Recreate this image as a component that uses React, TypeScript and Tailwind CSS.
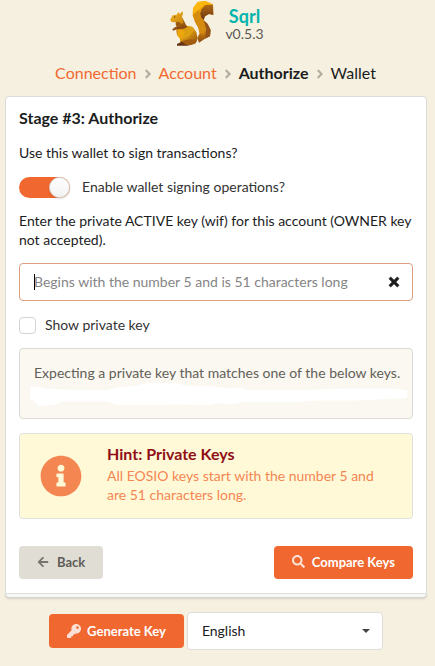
import React, { useState } from "react";
import {
  FaAngleRight,
  FaArrowLeft,
  FaInfoCircle,
  FaKey,
  FaSearch,
  FaTimes,
} from "react-icons/fa";

function Squirrel() {
  return (
    <svg viewBox="0 0 150 150" className="size-[50px]" aria-hidden="true">
      <defs>
        <linearGradient id="tailOuter" x1="0" y1="0" x2="0" y2="1">
          <stop offset="0" stopColor="#fbb40a" />
          <stop offset="0.45" stopColor="#d98c0c" />
          <stop offset="0.75" stopColor="#c97b10" />
          <stop offset="1" stopColor="#8a4a14" />
        </linearGradient>
        <linearGradient id="tailTip" x1="0" y1="0" x2="0" y2="1">
          <stop offset="0" stopColor="#b06a14" />
          <stop offset="1" stopColor="#6e3614" />
        </linearGradient>
        <linearGradient id="haunch" x1="0" y1="0" x2="1" y2="1">
          <stop offset="0" stopColor="#b87010" />
          <stop offset="0.4" stopColor="#e6a210" />
          <stop offset="1" stopColor="#8c4c10" />
        </linearGradient>
        <linearGradient id="head" x1="0" y1="0" x2="1" y2="1">
          <stop offset="0" stopColor="#f4b820" />
          <stop offset="1" stopColor="#c98410" />
        </linearGradient>
      </defs>
      <path d="M78 28 92 9 115 6 138 16 139 48 126 45 114 52 110 63 122 75 131 93 129 112 116 118 96 131 91 116 98 103 94 86 84 68 77 50Z" fill="url(#tailOuter)" />
      <path d="M115 18 138 17 139 48 126 45 114 52 110 63 103 56 99 44 104 30Z" fill="url(#tailTip)" />
      <path d="M78 28 92 9 115 6 130 13 110 18 94 33 80 46Z" fill="#fbb610" />
      <path d="M80 46 94 33 99 44 103 57 109 68 118 90 110 104 98 103 94 86 84 68Z" fill="#d58a10" />
      <path d="M110 64 122 75 131 93 129 112 114 119 118 90Z" fill="#94531a" />
      <path d="M27 63 47 58 56 76 62 84 46 96 30 88 26 76Z" fill="#9b5b10" />
      <path d="M29 47 34 39 39 45 46 36 48 44 45 53 50 65 46 76 34 68 26 70 14 69 9 63 17 49Z" fill="url(#head)" />
      <path d="M29 88 46 88 63 81 77 84 88 99 92 119 86 132 72 137 40 137 39 120 30 108 28 96Z" fill="url(#haunch)" />
      <path d="M32 92 46 89 54 98 47 116 40 120 32 108Z" fill="#eba60c" />
      <path d="M63 81 77 84 82 94 66 112 46 120 54 98Z" fill="#dda012" />
      <path d="M46 78 56 80 62 84 46 91 31 90 18 95 16 91 25 84 40 84Z" fill="#8b4b12" />
      <path d="M42 127 68 121 90 124 86 133 73 138 44 138Z" fill="#a25d10" />
      <path d="M30 135 44 128 58 137 70 140 30 140Z" fill="#673315" />
      <circle cx="23" cy="54" r="2" fill="#69400f" />
    </svg>
  );
}

const steps = ["Connection", "Account", "Authorize", "Wallet"];

function Breadcrumb() {
  return (
    <nav aria-label="Progress" className="mt-[15px] flex h-5 items-center justify-center pr-1 text-base leading-5">
      {steps.map((step, index) => (
        <React.Fragment key={step}>
          {index > 0 && <FaAngleRight className="mx-1 mt-px size-3.5 text-[#b3aea3]" />}
          {index < 2 ? (
            <a href="#" className="text-[#f06830]">{step}</a>
          ) : (
            <span className={index === 2 ? "font-bold text-[#1b1c1d]" : "text-[#1b1c1d]"}>{step}</span>
          )}
        </React.Fragment>
      ))}
    </nav>
  );
}

export default function App() {
  const [enabled, setEnabled] = useState(true);
  const [visible, setVisible] = useState(false);
  const [key, setKey] = useState("");

  return (
    <div className="min-h-screen bg-[#f6f0e0] pb-4 font-['Lato',sans-serif] text-sm leading-5 text-[#1b1c1d]">
      <header className="flex h-12 items-center justify-center gap-2 pr-1">
        <Squirrel />
        <div className="flex flex-col items-center">
          <h1 className="text-lg leading-5 font-bold text-[#00b5ad]">Sqrl</h1>
          <p className="leading-4 text-[#5c5a56]">v0.5.3</p>
        </div>
      </header>

      <Breadcrumb />

      <main className="mt-[13px] mr-2 ml-[5px]">
        <div className="relative z-10 rounded-t border border-[#dcdcd9] bg-white px-[13px] pt-[11px] pb-[14px]">
          <h2 className="text-base leading-5 font-bold">Stage #3: Authorize</h2>
          <p className="mt-[15px]">Use this wallet to sign transactions?</p>

          <label className="mt-3 flex h-6 items-center gap-3 text-[#333]">
            <input
              type="checkbox"
              role="switch"
              checked={enabled}
              onChange={(event) => setEnabled(event.target.checked)}
              className="peer sr-only"
            />
            <span className="flex h-[21px] w-[51px] rounded-full bg-gray-200 peer-checked:justify-end peer-checked:bg-[#f06830]">
              <span className="size-[21px] rounded-full border border-[#d8d8d8] bg-gradient-to-b from-white to-[#f2f2f2] shadow-sm" />
            </span>
            Enable wallet signing operations?
          </label>

          <p className="mt-3 leading-[19px]">
            Enter the private ACTIVE key (wif) for this account (OWNER key not accepted).
          </p>

          <div className="relative mt-[14px] flex h-[38px] items-center rounded border border-[#dda080] bg-white pr-[11px] pl-[14px]">
            <input
              aria-label="Private key"
              type={visible ? "text" : "password"}
              value={key}
              autoFocus
              onChange={(event) => setKey(event.target.value)}
              placeholder="Begins with the number 5 and is 51 characters long"
              className="peer min-w-0 flex-1 caret-black outline-none placeholder:text-[#858585] placeholder-shown:caret-transparent"
            />
            <span className="pointer-events-none absolute left-[14px] hidden h-4 w-px bg-black peer-placeholder-shown:block" />
            <button type="button" aria-label="Clear key" onClick={() => setKey("")}>
              <FaTimes className="size-3.5 stroke-current stroke-[24]" />
            </button>
          </div>

          <label className="mt-[14px] flex h-5 items-center gap-[9px] text-[#333]">
            <input
              type="checkbox"
              checked={visible}
              onChange={(event) => setVisible(event.target.checked)}
              className="size-[17px] appearance-none rounded-sm border border-[#d4d4d5] bg-white checked:bg-[#f06830]"
            />
            Show private key
          </label>

          <section className="mt-[13px] rounded border border-[#dcdad4] bg-[#fbf8f1] pt-[14px] pr-1 pb-3 pl-[14px] text-[#626058]">
            <p>Expecting a private key that matches one of the below keys.</p>
            <svg viewBox="0 0 376 25" preserveAspectRatio="none" className="-ml-1 block h-[23px] w-[calc(100%+3px)]" aria-hidden="true">
              <path d="M0 4 8 4 15 6 32 7 75 8 87 5 104 3 118 0 144 0 157 3 187 4 199 6 210 5 217 8 263 8 287 7 321 6 360 6 376 8 376 16 360 17 328 19 290 19 262 21 219 21 213 20 207 22 198 23 188 22 178 24 160 24 144 23 136 24 87 24 77 20 32 20 24 24 8 25 5 20 0 17Z" fill="#fff" />
            </svg>
          </section>

          <section className="mt-[14px] flex h-[86px] items-center rounded border border-[#dee1dc] bg-[#fff9d8] pr-8 pl-5">
            <FaInfoCircle className="mr-[25px] size-[42px] shrink-0 text-[#f48652]" />
            <div className="pb-1">
              <h3 className="text-base leading-5 font-bold text-[#8f0e16]">Hint: Private Keys</h3>
              <p className="mt-[2px] leading-[19px] text-[#f48652]">All EOSIO keys start with the number 5 and are 51 characters long.</p>
            </div>
          </section>

          <div className="mt-[27px] flex justify-between text-[13px] font-bold">
            <button type="button" className="flex h-[33px] items-center gap-2 rounded bg-[#e0ddd5] px-[18px] pb-[2px] text-[#5e5c58]">
              <FaArrowLeft className="size-3 text-[#77756f]" />
              Back
            </button>
            <button type="button" className="flex h-[33px] items-center gap-[7px] rounded bg-[#f06830] px-[18px] pb-[2px] text-white">
              <FaSearch className="size-[13px] opacity-80" />
              Compare Keys
            </button>
          </div>
        </div>
        <div className="h-1 rounded-b border-x border-b border-[#d4d4d2] bg-[#f7f7f5] shadow-sm" />
      </main>

      <footer className="mt-[14px] flex items-center justify-center gap-[3px] pr-[3px]">
        <button type="button" className="flex h-[34px] items-center gap-[6px] rounded bg-[#f06830] px-[18px] text-[13px] font-bold text-white">
          <FaKey className="size-3.5 opacity-80" />
          Generate Key
        </button>
        <div className="relative w-[196px]">
          <select aria-label="Language" defaultValue="English" className="h-[38px] w-full appearance-none rounded border border-[#dededc] bg-white px-[14px]">
            <option>English</option>
          </select>
          <span className="pointer-events-none absolute top-[17px] right-[13px] border-x-4 border-t-4 border-x-transparent border-t-[#444]" />
        </div>
      </footer>
    </div>
  );
}
